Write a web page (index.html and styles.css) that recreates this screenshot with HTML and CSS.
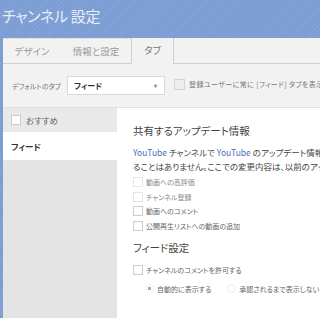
FILE: index.html
```html
<!DOCTYPE html>
<html lang="ja">
<head>
    <meta charset="UTF-8">
    <title>チャンネル設定</title>
    <link rel="stylesheet" href="styles.css">
</head>
<body>
    <div class="page-header">
        <h1>チャンネル 設定</h1>
    </div>

    <div class="page">
        <div class="tabs">
            <div class="tab-group">
                <a href="#" class="tab tab-design">デザイン</a>
                <a href="#" class="tab tab-info">情報と設定</a>
            </div>
            <a href="#" class="tab tab-active">タブ</a>
            <div class="tab-rest"></div>
        </div>

        <div class="default-tab">
            <label class="default-label" for="defaultTab">デフォルトのタブ</label>
            <div class="select-box" id="defaultTab">
                <span>フィード</span>
                <span class="arrow">&#9662;</span>
            </div>
            <span class="check"></span>
            <span class="small-text">登録ユーザーに常に [フィード] タブを表示する</span>
        </div>

        <div class="content">
            <div class="sidebar">
                <div class="side-item side-item-off">
                    <span class="check"></span>
                    おすすめ
                </div>
                <div class="side-item side-item-active">フィード</div>
            </div>

            <div class="panel">
                <h2>共有するアップデート情報</h2>
                <p class="intro">
                    <a href="#">YouTube</a> チャンネルで <a href="#">YouTube</a> のアップデート情報を共有すると、登録者のホームページに表示さ<br>
                    ることはありません。ここでの変更内容は、以前のアップデートには適用されません。
                </p>

                <div class="option option-dim"><span class="check"></span>動画への高評価</div>
                <div class="option option-dim"><span class="check"></span>チャンネル登録</div>
                <div class="option"><span class="check"></span>動画へのコメント</div>
                <div class="option"><span class="check"></span>公開再生リストへの動画の追加</div>

                <h2 class="feed-title">フィード設定</h2>
                <div class="option"><span class="check"></span>チャンネルのコメントを許可する</div>

                <div class="radios">
                    <span class="radio radio-on"></span>
                    <span class="radio-label">自動的に表示する</span>
                    <span class="radio"></span>
                    <span class="radio-label">承認されるまで表示しない</span>
                </div>
            </div>
        </div>
    </div>
</body>
</html>
```

FILE: styles.css
```css
body {
    margin: 0;
    width: 320px;
    height: 318px;
    overflow: hidden;
    font-family: "Noto Sans CJK JP", "Noto Sans", sans-serif;
    font-feature-settings: "palt";
    color: #333;
    background-color: #7c9dd4;
    background-image: repeating-linear-gradient(135deg, rgba(255, 255, 255, 0.06) 0 1px, transparent 1px 3px);
}

a {
    text-decoration: none;
}

.page-header {
    height: 38px;
    box-sizing: border-box;
    padding: 6px 0 0 2px;
}

h1 {
    margin: 0;
    font-size: 15px;
    font-weight: normal;
    line-height: 20px;
    color: #e9eef8;
    letter-spacing: -0.3px;
}

.page {
    margin-left: 3px;
    width: 520px;
    height: 280px;
    background-color: #f2f2f2;
}

/* Tabs */
.tabs {
    display: flex;
    height: 26px;
}

.tab-group {
    display: flex;
    flex: none;
    width: 128px;
    border-top: 1px solid #e2e2e2;
    border-bottom: 1px solid #cfcfcf;
    box-sizing: border-box;
}

.tab {
    display: block;
    flex: none;
    font-size: 9.5px;
    color: #999;
    line-height: 24px;
    text-align: center;
}

.tab-design {
    width: 58px;
}

.tab-info {
    width: 70px;
}

.tab-active {
    width: 41px;
    color: #777;
    border-left: 1px solid #cfcfcf;
    border-right: 1px solid #cfcfcf;
}

.tab-rest {
    flex: 1;
    border-bottom: 1px solid #cfcfcf;
}

/* Default tab row */
.default-tab {
    display: flex;
    align-items: center;
    height: 43px;
    padding: 0 0 0 9px;
    border-bottom: 1px solid #e0e0e0;
}

.default-label {
    flex: none;
    width: 55px;
    font-size: 7px;
    color: #777;
    white-space: nowrap;
}

.select-box {
    display: flex;
    flex: none;
    justify-content: space-between;
    align-items: center;
    width: 98px;
    height: 19px;
    box-sizing: border-box;
    padding: 0 7px 0 6px;
    background-color: #fff;
    border: 1px solid #d9d9d9;
    font-size: 8px;
    font-weight: bold;
    color: #333;
}

.select-box .arrow {
    font-size: 6px;
    color: #888;
}

.default-tab .check {
    width: 11px;
    height: 11px;
    margin: -3px 4px 0 9px;
    background-color: #eee;
    border-color: #d4d4d4;
}

.small-text {
    margin-top: -3px;
    font-size: 7px;
    color: #777;
    letter-spacing: 0.4px;
    white-space: nowrap;
}

.check {
    display: inline-block;
    box-sizing: border-box;
    border: 1px solid #cdcdcd;
    background-color: #fff;
    flex: none;
}

/* Content */
.content {
    display: flex;
    height: 235px;
}

.sidebar {
    flex: none;
    width: 114px;
    background-color: #e4e4e4;
}

.side-item {
    display: flex;
    align-items: center;
    padding-left: 8px;
    font-size: 8.5px;
}

.side-item-off {
    height: 24px;
    color: #666;
    background-color: #e9e9e9;
}

.side-item-off .check {
    width: 10px;
    height: 10px;
    margin-right: 5px;
}

.side-item-active {
    height: 28px;
    background-color: #fff;
    font-weight: bold;
    color: #333;
}

.panel {
    flex: 1;
    min-width: 0;
    background-color: #fff;
    padding: 15px 0 0 16px;
}

h2 {
    margin: 0;
    font-size: 10.5px;
    font-weight: normal;
    line-height: 16px;
    color: #444;
}

.intro {
    margin: 6px 0 2px;
    font-size: 8.5px;
    line-height: 14px;
    color: #444;
    white-space: nowrap;
}

.intro a {
    color: #4a6dc2;
}

.option {
    display: flex;
    align-items: center;
    height: 14.5px;
    font-size: 7px;
    color: #666;
}

.option .check {
    width: 10px;
    height: 10px;
    margin-right: 3px;
}

.option-dim {
    color: #888;
}

.option-dim .check {
    border-color: #e6e6e6;
}

.feed-title {
    margin: 7px 0 7px;
}

.radios {
    display: flex;
    align-items: center;
    margin-top: 6px;
    padding-left: 12px;
    font-size: 7px;
    color: #666;
}

.radio {
    width: 9px;
    height: 9px;
    box-sizing: border-box;
    border-radius: 50%;
    border: 1px solid #ebebeb;
    margin-right: 3px;
}

.radio-on {
    border-color: #f2f2f2;
    background: radial-gradient(circle, #aaa 0 1.5px, #fff 2px);
}

.radio-label {
    margin-right: 16px;
}
```
